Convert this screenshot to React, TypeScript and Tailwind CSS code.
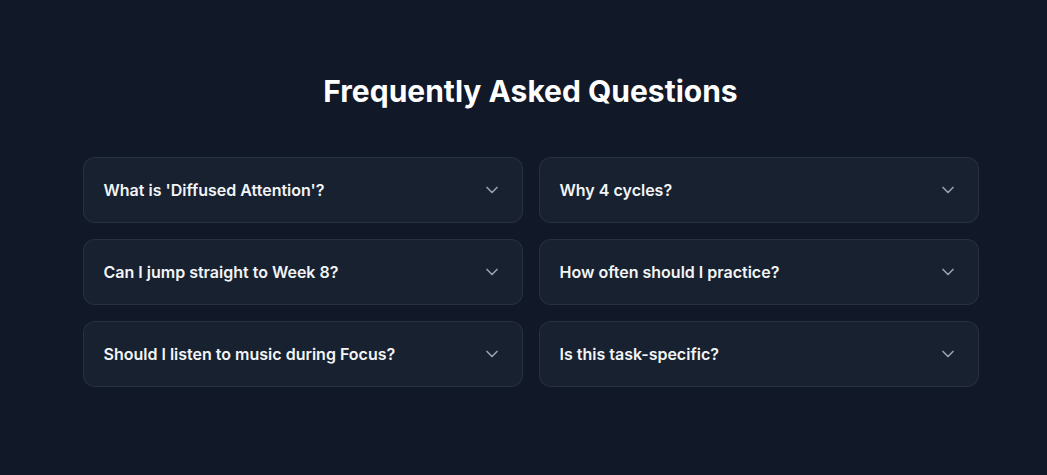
import { ChevronDown } from "lucide-react";

const faqs = [
  "What is 'Diffused Attention'?",
  "Why 4 cycles?",
  "Can I jump straight to Week 8?",
  "How often should I practice?",
  "Should I listen to music during Focus?",
  "Is this task-specific?",
];

export default function App() {
  return (
    <div className="min-h-screen bg-[#111827] font-['Inter',sans-serif]">
      <section className="pt-[73px] pb-16 pl-[14px]">
        <div className="max-w-[896px] mx-auto">
          <h2 className="text-3xl font-bold text-white text-center mb-12">
            Frequently Asked Questions
          </h2>
          <div className="grid grid-cols-2 gap-4">
            {faqs.map((q) => (
              <button
                key={q}
                className="flex items-center justify-between px-5 py-5 rounded-xl border border-gray-700/50 bg-gray-800/50 text-left"
              >
                <span className="text-base leading-6 font-semibold text-gray-100">{q}</span>
                <ChevronDown className="w-5 h-5 text-gray-400" />
              </button>
            ))}
          </div>
        </div>
      </section>
    </div>
  );
}
